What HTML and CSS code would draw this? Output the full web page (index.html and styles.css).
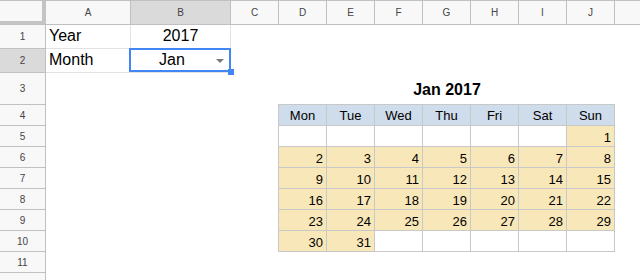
FILE: index.html
```html
<!DOCTYPE html>
<html lang="en">
<head>
  <meta charset="UTF-8" />
  <title>Calendar - Sheet</title>
  <link rel="stylesheet" href="styles.css">
</head>
<body>

<div class="sheet">
  <div class="col-heads">
    <div class="corner"></div>
    <div class="ch w-a">A</div>
    <div class="ch w-b active">B</div>
    <div class="ch">C</div>
    <div class="ch">D</div>
    <div class="ch">E</div>
    <div class="ch">F</div>
    <div class="ch">G</div>
    <div class="ch">H</div>
    <div class="ch">I</div>
    <div class="ch">J</div>
    <div class="ch last"></div>
  </div>

  <div class="sheet-body">
    <div class="row-heads">
      <div class="rh">1</div>
      <div class="rh active">2</div>
      <div class="rh tall">3</div>
      <div class="rh short">4</div>
      <div class="rh short">5</div>
      <div class="rh short">6</div>
      <div class="rh short">7</div>
      <div class="rh short">8</div>
      <div class="rh short">9</div>
      <div class="rh short">10</div>
      <div class="rh short">11</div>
      <div class="rh short"></div>
    </div>

    <div class="cells">
      <div class="cell lined a1">Year</div>
      <div class="cell lined b1 center">2017</div>
      <div class="cell lined a2">Month</div>
      <div class="cell lined b2 select">
        <span class="val">Jan</span>
        <span class="arrow"></span>
        <div class="sel-box"><span class="handle"></span></div>
      </div>

      <div class="cal-title">Jan 2017</div>

      <div class="cal">
        <div class="day-name">Mon</div>
        <div class="day-name">Tue</div>
        <div class="day-name">Wed</div>
        <div class="day-name">Thu</div>
        <div class="day-name">Fri</div>
        <div class="day-name">Sat</div>
        <div class="day-name">Sun</div>

        <div class="day"></div>
        <div class="day"></div>
        <div class="day"></div>
        <div class="day"></div>
        <div class="day"></div>
        <div class="day"></div>
        <div class="day on">1</div>

        <div class="day on">2</div>
        <div class="day on">3</div>
        <div class="day on">4</div>
        <div class="day on">5</div>
        <div class="day on">6</div>
        <div class="day on">7</div>
        <div class="day on">8</div>

        <div class="day on">9</div>
        <div class="day on">10</div>
        <div class="day on">11</div>
        <div class="day on">12</div>
        <div class="day on">13</div>
        <div class="day on">14</div>
        <div class="day on">15</div>

        <div class="day on">16</div>
        <div class="day on">17</div>
        <div class="day on">18</div>
        <div class="day on">19</div>
        <div class="day on">20</div>
        <div class="day on">21</div>
        <div class="day on">22</div>

        <div class="day on">23</div>
        <div class="day on">24</div>
        <div class="day on">25</div>
        <div class="day on">26</div>
        <div class="day on">27</div>
        <div class="day on">28</div>
        <div class="day on">29</div>

        <div class="day on">30</div>
        <div class="day on">31</div>
        <div class="day"></div>
        <div class="day"></div>
        <div class="day"></div>
        <div class="day"></div>
        <div class="day"></div>
      </div>
    </div>
  </div>
</div>

</body>
</html>
```

FILE: styles.css
```css
:root {
  --head-bg: #f8f8f8;
  --head-active: #dadada;
  --head-line: #c0c0c0;
  --cell-line: #e2e2e2;
  --cal-line: #c8c8c8;
  --cal-head: #cfdcec;
  --cal-day: #f8e7b8;
  --select: #4285f4;
}

* {
  box-sizing: border-box;
}

body {
  margin: 0;
  background: #fff;
  font-family: "Liberation Sans", Arial, sans-serif;
  color: #000;
  overflow: hidden;
}

.sheet {
  width: 640px;
  height: 280px;
  overflow: hidden;
}

/* column headers */
.col-heads {
  display: flex;
  height: 25px;
  border-top: 1px solid var(--head-line);
  border-bottom: 1px solid var(--head-line);
  background: var(--head-bg);
}

.corner {
  flex: 0 0 46px;
  border-right: 4px solid #c4c4c4;
  border-bottom: 3px solid #c4c4c4;
}

.ch {
  flex: 0 0 48px;
  display: flex;
  align-items: center;
  justify-content: center;
  border-right: 1px solid var(--head-line);
  font-size: 10px;
  color: #444;
}

.ch.w-a { flex-basis: 85px; }
.ch.w-b { flex-basis: 100px; }
.ch.last { flex: 1; border-right: none; }

.ch.active,
.rh.active {
  background: var(--head-active);
}

/* row headers + cells */
.sheet-body {
  display: flex;
}

.row-heads {
  flex: 0 0 46px;
  display: flex;
  flex-direction: column;
}

.rh {
  height: 24px;
  display: flex;
  align-items: center;
  justify-content: center;
  background: var(--head-bg);
  border-right: 1px solid var(--head-line);
  border-bottom: 1px solid var(--head-line);
  font-size: 10px;
  color: #444;
}

.rh.tall { height: 32px; }
.rh.short { height: 21px; }

.cells {
  flex: 1;
  display: grid;
  grid-template-columns: 85px 100px repeat(8, 48px) 1fr;
  grid-template-rows: 24px 24px 32px repeat(9, 21px);
}

.cell {
  display: flex;
  align-items: flex-end;
  padding: 0 3px 3px;
  font-size: 16px;
  line-height: 18px;
}

.cell.lined {
  border-right: 1px solid var(--cell-line);
  border-bottom: 1px solid var(--cell-line);
}

.cell.center { justify-content: center; }

.a1 { grid-area: 1 / 1; }
.b1 { grid-area: 1 / 2; }
.a2 { grid-area: 2 / 1; }
.b2 { grid-area: 2 / 2; }

.select {
  position: relative;
  padding-right: 0;
}

.select .val {
  flex: 1;
  text-align: center;
}

.arrow {
  width: 0;
  height: 0;
  margin: 0 6px 6px 6px;
  border-left: 4px solid transparent;
  border-right: 4px solid transparent;
  border-top: 4px solid #7a7a7a;
}

.sel-box {
  position: absolute;
  top: -1px;
  left: -2px;
  right: -1px;
  bottom: 0;
  border: 2px solid var(--select);
  pointer-events: none;
}

.handle {
  position: absolute;
  right: -5px;
  bottom: -5px;
  width: 6px;
  height: 6px;
  background: var(--select);
}

/* calendar */
.cal-title {
  grid-row: 3;
  grid-column: 4 / 11;
  display: flex;
  align-items: flex-end;
  justify-content: center;
  padding-bottom: 6px;
  font-size: 16px;
  line-height: 18px;
  font-weight: bold;
}

.cal {
  grid-row: 4 / 11;
  grid-column: 4 / 11;
  margin: -1px 0 0 -1px;
  display: grid;
  grid-template-columns: repeat(7, 48px);
  grid-template-rows: repeat(7, 21px);
  border-top: 1px solid var(--cal-line);
  border-left: 1px solid var(--cal-line);
  font-size: 13px;
  line-height: 15px;
}

.day-name,
.day {
  display: flex;
  border-right: 1px solid var(--cal-line);
  border-bottom: 1px solid var(--cal-line);
}

.day-name {
  align-items: center;
  justify-content: center;
  background: var(--cal-head);
}

.day {
  align-items: flex-end;
  justify-content: flex-end;
  padding: 0 3px 1px 0;
}

.day.on {
  background: var(--cal-day);
}
```
